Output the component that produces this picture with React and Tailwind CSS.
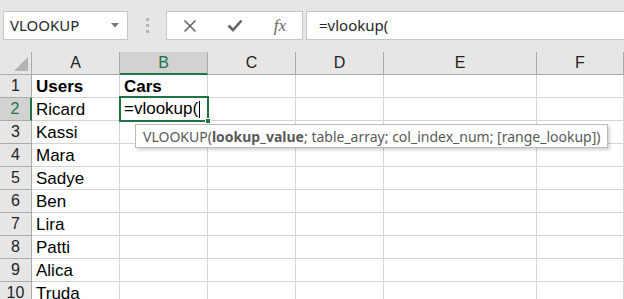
const cols = [
  ['A', 'w-[88px]'],
  ['B', 'w-[88px]'],
  ['C', 'w-[88px]'],
  ['D', 'w-[88px]'],
  ['E', 'w-[153px]'],
  ['F', 'flex-1']
];

const users = ['Users', 'Ricard', 'Kassi', 'Mara', 'Sadye', 'Ben', 'Lira', 'Patti', 'Alica', 'Truda'];

const uiFont = "font-['Noto_Sans',sans-serif]";
const gridFont = "font-['Liberation_Sans',Arial,sans-serif]";

function FormulaBar() {
  return (
    <div className={`flex h-[52px] items-start bg-[#e6e6e6] pt-[11px] ${uiFont}`}>
      <div className="ml-[3px] flex h-[29px] w-[125px] items-center justify-between border border-[#c6c6c6] bg-white pl-[6px] pr-[8px]">
        <span className="text-[15px] text-[#262626]">VLOOKUP</span>
        <svg width="8" height="5" viewBox="0 0 8 5"><path d="M0 0h8L4 4.5z" fill="#777" /></svg>
      </div>
      <div className="flex h-[29px] w-[38px] flex-col items-center justify-center gap-[3px]">
        <span className="h-[3px] w-[3px] bg-[#b5b5b5]" />
        <span className="h-[3px] w-[3px] bg-[#b5b5b5]" />
        <span className="h-[3px] w-[3px] bg-[#b5b5b5]" />
      </div>
      <div className="flex h-[29px] w-[137px] items-center border border-[#c6c6c6] bg-white">
        <div className="flex w-[46px] justify-center">
          <svg width="14" height="14" viewBox="0 0 14 14"><path d="M1.5 1.5l11 11M12.5 1.5l-11 11" stroke="#666" strokeWidth="1.6" /></svg>
        </div>
        <div className="flex w-[46px] justify-center">
          <svg width="16" height="13" viewBox="0 0 16 13"><path d="M1.5 6.5l4.5 4.5L14.5 1.5" stroke="#666" strokeWidth="2.6" fill="none" /></svg>
        </div>
        <div className="flex w-[45px] justify-center">
          <span className="font-['Liberation_Serif',serif] text-[17px] italic text-[#666]">fx</span>
        </div>
      </div>
      <div className="ml-[3px] flex h-[29px] flex-1 items-center border-y border-l border-[#c6c6c6] bg-white pl-[12px]">
        <span className="text-[15px] text-[#262626]">=vlookup(</span>
      </div>
    </div>
  );
}

function HeaderRow() {
  return (
    <div className={`flex h-[23px] bg-[#e6e6e6] text-[16px] text-[#222] ${gridFont}`}>
      <div className="relative w-[32px] border-r border-b border-[#ababab]">
        <svg className="absolute right-[3px] bottom-[3px]" width="14" height="14" viewBox="0 0 14 14"><path d="M14 0v14H0z" fill="#b4b4b4" /></svg>
      </div>
      {cols.map(([c, w]) =>
        c === 'B' ? (
          <div key={c} className={`${w} flex items-center justify-center border-r border-[#ababab] border-b-2 border-b-[#217346] bg-[#d2d2d2] text-[#217346]`}>{c}</div>
        ) : (
          <div key={c} className={`${w} flex items-center justify-center border-r border-b border-[#ababab]`}>{c}</div>
        )
      )}
    </div>
  );
}

function Row({ n, name }) {
  const active = n === 2;
  return (
    <div className={`flex h-[23px] text-[17px] text-black ${gridFont}`}>
      <div
        className={`flex w-[32px] items-center justify-center border-b border-[#ababab] text-[16px] ${
          active ? 'border-r-2 border-r-[#217346] bg-[#d2d2d2] text-[#217346]' : 'border-r border-r-[#ababab] bg-[#e6e6e6] text-[#222]'
        }`}
      >
        {n}
      </div>
      {cols.map(([c, w]) => (
        <div key={c} className={`${w} relative flex items-center border-r border-b border-[#d4d4d4] pl-[4px] pt-px`}>
          {c === 'A' && <span className={n === 1 ? 'font-bold' : ''}>{name}</span>}
          {c === 'B' && n === 1 && <span className="font-bold">Cars</span>}
          {c === 'B' && active && (
            <div className="absolute -top-[2px] -left-[1px] z-10 flex h-[26px] w-[90px] items-center border-2 border-[#217346] bg-white pl-[3px]">
              <span>=vlookup(</span>
              <span className="ml-[1px] h-[17px] w-px bg-black" />
              <span className="absolute -right-[4px] -bottom-[4px] h-[6px] w-[6px] border border-white bg-[#217346]" />
            </div>
          )}
        </div>
      ))}
    </div>
  );
}

export default function App() {
  return (
    <div className="relative h-[299px] w-[624px] overflow-hidden bg-white">
      <FormulaBar />
      <HeaderRow />
      {users.map((u, i) => (
        <Row key={i} n={i + 1} name={u} />
      ))}
      <div className={`absolute top-[124px] left-[135px] z-20 flex h-[24px] w-[473px] items-center border border-[#bcbcbc] bg-white pl-[7px] text-[14px] text-[#595959] shadow-[2px_2px_3px_rgba(0,0,0,0.18)] ${uiFont}`}>
        <span>VLOOKUP(</span>
        <span className="font-bold">lookup_value</span>
        <span className="whitespace-pre">; table_array; col_index_num; [range_lookup])</span>
      </div>
    </div>
  );
}
